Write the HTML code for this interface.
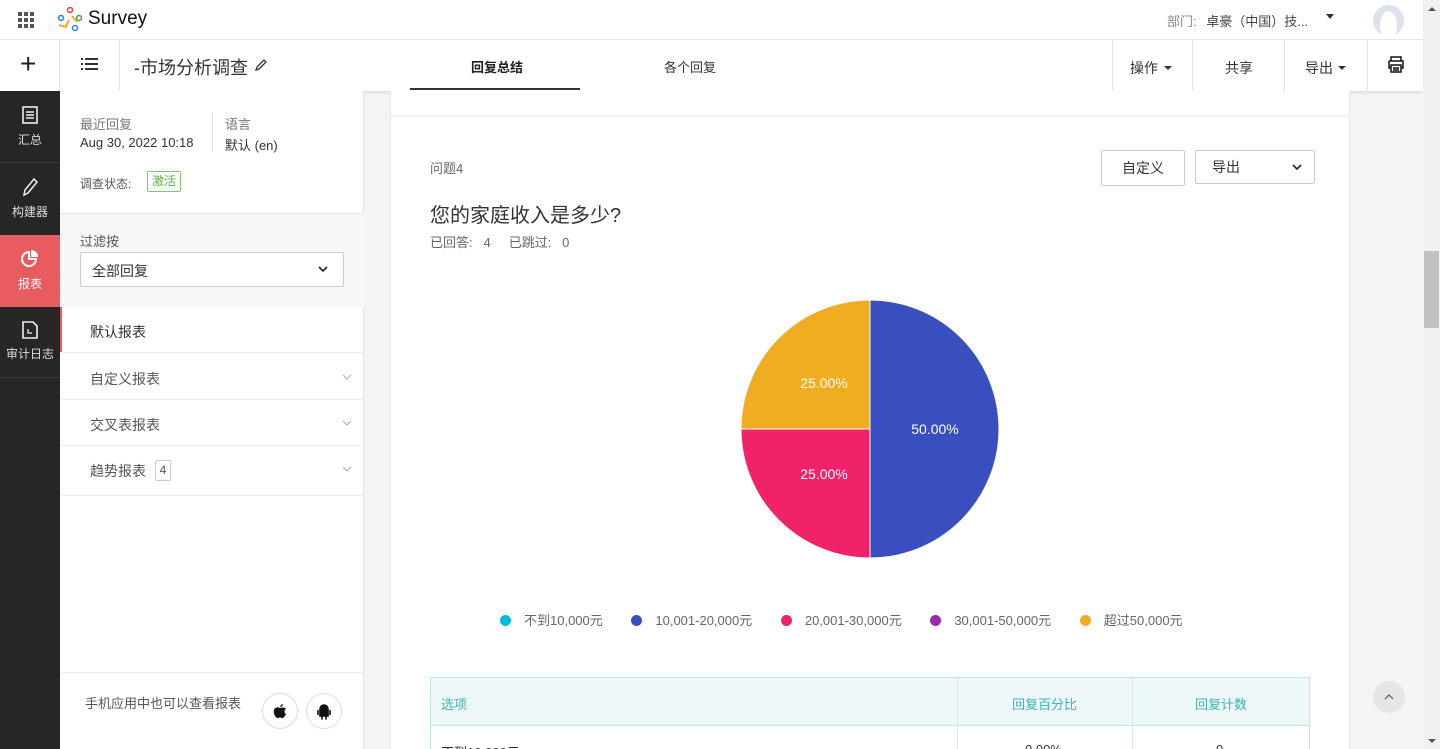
<!DOCTYPE html>
<html style="overflow:hidden;height:749px"><head><meta charset="utf-8">
<style>
*{box-sizing:border-box;margin:0;padding:0}
html,body{overflow:hidden}
body{width:1440px;height:749px;overflow:hidden;font-family:"Liberation Sans","Noto Sans CJK SC",sans-serif;background:#f4f4f4;position:relative;color:#333}
.abs{position:absolute}
#wrap{position:absolute;left:0;top:0;width:1440px;height:749px;overflow:hidden}
</style></head><body><div id="wrap">
<div class="abs" style="left:0;top:0;width:1423px;height:40px;background:#fff;border-bottom:1px solid #e6e6e6"></div>
<svg class="abs" style="left:18px;top:12px" width="16" height="16"><g fill="#555"><rect x="0" y="0" width="4" height="4"/><rect x="6" y="0" width="4" height="4"/><rect x="12" y="0" width="4" height="4"/><rect x="0" y="6" width="4" height="4"/><rect x="6" y="6" width="4" height="4"/><rect x="12" y="6" width="4" height="4"/><rect x="0" y="12" width="4" height="4"/><rect x="6" y="12" width="4" height="4"/><rect x="12" y="12" width="4" height="4"/></g></svg>
<svg class="abs" style="left:57px;top:6px" width="26" height="26"><circle cx="13" cy="4" r="2.5" fill="none" stroke="#e53935" stroke-width="1.5"/><circle cx="4" cy="12" r="2.5" fill="none" stroke="#1e88e5" stroke-width="1.5"/><circle cx="22" cy="12" r="2.5" fill="none" stroke="#43a047" stroke-width="1.5"/><circle cx="18" cy="22" r="2.5" fill="none" stroke="#1e88e5" stroke-width="1.5"/><path d="M2 19 L9 21 M12 14 L8 22 M15 10 L20 16" stroke="#f9a825" stroke-width="2"/></svg>
<div class="abs" style="left:88px;top:8px;font-size:19px;color:#111">Survey</div>
<div class="abs" style="left:1167px;top:11px;font-size:13px;color:#888">部门: <span style="color:#444;margin-left:6px">卓豪（中国）技...</span></div>
<div class="abs" style="left:1326px;top:14px;border:4px solid transparent;border-top:5px solid #333"></div>
<div class="abs" style="left:1373px;top:5px;width:31px;height:31px;border-radius:50%;background:#dde2ea;overflow:hidden"><div style="position:absolute;left:7px;top:6px;width:17px;height:30px;border-radius:50%;background:#fff"></div></div>
<div class="abs" style="left:0;top:40px;width:1423px;height:51px;background:#fff;box-shadow:0 2px 3px rgba(0,0,0,.1)"></div>
<div class="abs" style="left:59px;top:40px;width:1px;height:51px;background:#e6e6e6"></div>
<div class="abs" style="left:119px;top:40px;width:1px;height:51px;background:#e6e6e6"></div>
<div class="abs" style="left:20px;top:50px;font-size:28px;font-weight:300;color:#222;line-height:28px">+</div>
<svg class="abs" style="left:81px;top:58px" width="18" height="14"><g fill="#333"><rect x="0" y="0" width="2" height="2"/><rect x="4" y="0" width="13" height="2"/><rect x="0" y="5" width="2" height="2"/><rect x="4" y="5" width="13" height="2"/><rect x="0" y="10" width="2" height="2"/><rect x="4" y="10" width="13" height="2"/></g></svg>
<div class="abs" style="left:134px;top:54px;font-size:18px;color:#333">-市场分析调查</div>
<svg class="abs" style="left:254px;top:58px" width="14" height="14"><path d="M2 12 L3 9 L10 2 L12 4 L5 11 Z" fill="none" stroke="#333" stroke-width="1.3"/></svg>
<div class="abs" style="left:471px;top:57px;font-size:13px;font-weight:bold;color:#222">回复总结</div>
<div class="abs" style="left:410px;top:88px;width:170px;height:2px;background:#333"></div>
<div class="abs" style="left:664px;top:57px;font-size:13px;color:#333">各个回复</div>
<div class="abs" style="left:1112px;top:40px;width:1px;height:51px;background:#e6e6e6"></div>
<div class="abs" style="left:1192px;top:40px;width:1px;height:51px;background:#e6e6e6"></div>
<div class="abs" style="left:1284px;top:40px;width:1px;height:51px;background:#e6e6e6"></div>
<div class="abs" style="left:1367px;top:40px;width:1px;height:51px;background:#e6e6e6"></div>
<div class="abs" style="left:1130px;top:58px;font-size:14px;color:#333">操作</div>
<div class="abs" style="left:1164px;top:66px;border:4px solid transparent;border-top:4px solid #333"></div>
<div class="abs" style="left:1225px;top:58px;font-size:14px;color:#333">共享</div>
<div class="abs" style="left:1305px;top:58px;font-size:14px;color:#333">导出</div>
<div class="abs" style="left:1338px;top:66px;border:4px solid transparent;border-top:4px solid #333"></div>
<svg class="abs" style="left:1387px;top:56px" width="18" height="17"><path d="M4 5 V1 H14 V5 M2 5 H16 V12 H14 M4 12 H2 V5 M4 9 H14 V16 H4 Z M6 12 H12 M6 14 H12" fill="none" stroke="#111" stroke-width="1.5"/></svg>
<div class="abs" style="left:1423px;top:0;width:17px;height:749px;background:#f1f1f1"></div>
<div class="abs" style="left:1424px;top:251px;width:15px;height:77px;background:#c1c1c1"></div>
<div class="abs" style="left:1428px;top:7px;border:4px solid transparent;border-bottom:4px solid #555;border-top:0"></div>
<div class="abs" style="left:1428px;top:739px;border:4px solid transparent;border-top:4px solid #555;border-bottom:0"></div>
<div class="abs" style="left:0;top:91px;width:60px;height:658px;background:#262626"></div>
<div class="abs" style="left:0;top:91px;width:60px;height:72px;border-bottom:1px solid #3a3a3a;color:#ddd;text-align:center;font-size:12px">
<svg style="margin-top:15px" width="16" height="18"><rect x="1" y="1" width="14" height="16" fill="none" stroke="#eee" stroke-width="1.6"/><path d="M4 6H12M4 9H12M4 12H12" stroke="#eee" stroke-width="1.4"/></svg><div style="margin-top:4px">汇总</div></div>
<div class="abs" style="left:0;top:164px;width:60px;height:71px;color:#ddd;text-align:center;font-size:12px">
<svg style="margin-top:13px" width="18" height="20"><path d="M3 18 L4 13 L13 2 L16 5 L7 16 Z" fill="none" stroke="#eee" stroke-width="1.5"/></svg><div style="margin-top:3px">构建器</div></div>
<div class="abs" style="left:0;top:235px;width:60px;height:72px;background:#e85b5e;color:#fff;text-align:center;font-size:12px">
<svg style="margin-top:14px" width="18" height="18"><path d="M8 3 A7 7 0 1 0 15 10 H8 Z" fill="none" stroke="#fff" stroke-width="2"/><path d="M10 1 A7 7 0 0 1 17 8 H10 Z" fill="#fff"/></svg><div style="margin-top:5px">报表</div></div>
<div class="abs" style="left:0;top:307px;width:60px;height:71px;border-bottom:1px solid #3a3a3a;color:#ddd;text-align:center;font-size:12px">
<svg style="margin-top:14px" width="16" height="18"><path d="M1 1H11L15 5V17H1Z" fill="none" stroke="#eee" stroke-width="1.6"/><path d="M6 8V12H10" stroke="#eee" stroke-width="1.3" fill="none"/></svg><div style="margin-top:3px">审计日志</div></div>
<div class="abs" style="left:60px;top:91px;width:304px;height:658px;background:#fff;border-right:1px solid #e2e2e2"></div>
<div class="abs" style="left:80px;top:114px;font-size:13px;color:#777">最近回复</div>
<div class="abs" style="left:80px;top:135px;font-size:13px;color:#333">Aug 30, 2022 10:18</div>
<div class="abs" style="left:212px;top:112px;width:1px;height:40px;background:#e2e2e2"></div>
<div class="abs" style="left:225px;top:114px;font-size:13px;color:#777">语言</div>
<div class="abs" style="left:225px;top:135px;font-size:13px;color:#333">默认 (en)</div>
<div class="abs" style="left:80px;top:175px;font-size:12px;color:#555">调查状态:</div>
<div class="abs" style="left:147px;top:171px;width:34px;height:21px;border:1px solid #7cc96c;border-radius:2px;color:#5bb34a;font-size:12px;text-align:center;line-height:19px">激活</div>
<div class="abs" style="left:60px;top:213px;width:304px;height:94px;background:#f7f7f7;border-top:1px solid #e6e6e6"></div>
<div class="abs" style="left:80px;top:231px;font-size:13px;color:#555">过滤按</div>
<div class="abs" style="left:80px;top:252px;width:264px;height:35px;background:#fff;border:1px solid #ccc;border-radius:2px;font-size:14px;color:#333;padding:8px 11px">全部回复</div>
<svg class="abs" style="left:318px;top:266px" width="10" height="7"><path d="M1 1L5 5L9 1" fill="none" stroke="#222" stroke-width="1.6"/></svg>
<div class="abs" style="left:60px;top:307px;width:2px;height:46px;background:#e85b5e"></div>
<div class="abs" style="left:90px;top:322px;font-size:14px;color:#333">默认报表</div>
<div class="abs" style="left:60px;top:352px;width:304px;height:1px;background:#ececec"></div>
<div class="abs" style="left:90px;top:369px;font-size:14px;color:#555">自定义报表</div>
<div class="abs" style="left:60px;top:399px;width:304px;height:1px;background:#ececec"></div>
<div class="abs" style="left:90px;top:415px;font-size:14px;color:#555">交叉表报表</div>
<div class="abs" style="left:60px;top:445px;width:304px;height:1px;background:#ececec"></div>
<div class="abs" style="left:90px;top:461px;font-size:14px;color:#555">趋势报表</div>
<div class="abs" style="left:155px;top:460px;width:16px;height:21px;border:1px solid #ccc;border-radius:2px;font-size:12px;text-align:center;line-height:19px;color:#555">4</div>
<div class="abs" style="left:60px;top:495px;width:304px;height:1px;background:#ececec"></div>
<svg class="abs" style="left:342px;top:374px" width="10" height="6"><path d="M1 1L5 5L9 1" fill="none" stroke="#aaa"/></svg>
<svg class="abs" style="left:342px;top:420px" width="10" height="6"><path d="M1 1L5 5L9 1" fill="none" stroke="#aaa"/></svg>
<svg class="abs" style="left:342px;top:466px" width="10" height="6"><path d="M1 1L5 5L9 1" fill="none" stroke="#aaa"/></svg>
<div class="abs" style="left:60px;top:672px;width:304px;height:1px;background:#ececec"></div>
<div class="abs" style="left:85px;top:693px;font-size:13px;color:#555">手机应用中也可以查看报表</div>
<div class="abs" style="left:262px;top:693px;width:36px;height:36px;border:1px solid #ddd;border-radius:50%;text-align:center">
<svg style="margin-top:9px" width="14" height="16"><path d="M7 4C8 1 10 1 10 1C10 3 8 4 7 4ZM7 5C5 4 2 4 1 7C0 11 3 15 4.5 15C6 15 6 14.5 7 14.5C8 14.5 8 15 9.5 15C11 15 12.5 12 13 11C11 10 11 7 13 6C12 4.5 10 4 7 5Z" fill="#111"/></svg></div>
<div class="abs" style="left:306px;top:693px;width:36px;height:36px;border:1px solid #ddd;border-radius:50%;text-align:center">
<svg style="margin-top:10px" width="14" height="16"><path d="M3 5A4 4 0 0 1 11 5Z M3 6H11V12H3Z M1 6.5V10.5 M13 6.5V10.5 M5 12V15 M9 12V15" fill="#111" stroke="#111" stroke-width="1.6" stroke-linecap="round"/></svg></div>
<div class="abs" style="left:390px;top:91px;width:960px;height:658px;background:#fff;border-left:1px solid #e8e8e8;border-right:1px solid #e8e8e8"></div>
<div class="abs" style="left:390px;top:115px;width:960px;height:2px;background:#f0f0f0"></div>
<div class="abs" style="left:430px;top:158px;font-size:13px;color:#666">问题4</div>
<div class="abs" style="left:1101px;top:150px;width:84px;height:36px;border:1px solid #ccc;border-radius:2px;font-size:14px;text-align:center;line-height:34px;color:#333">自定义</div>
<div class="abs" style="left:1195px;top:150px;width:120px;height:34px;border:1px solid #ccc;border-radius:2px;font-size:14px;line-height:32px;color:#333;padding-left:16px">导出</div>
<svg class="abs" style="left:1292px;top:164px" width="10" height="7"><path d="M1 1L5 5L9 1" fill="none" stroke="#222" stroke-width="1.6"/></svg>
<div class="abs" style="left:430px;top:199px;font-size:20px;color:#333">您的家庭收入是多少?</div>
<div class="abs" style="left:430px;top:232px;font-size:13px;color:#666">已回答:&nbsp;&nbsp; 4 &nbsp;&nbsp;&nbsp;&nbsp;已跳过:&nbsp;&nbsp; 0</div>
<svg class="abs" style="left:740px;top:299px" width="260" height="260">
<path d="M130 130 L130 1 A129 129 0 0 1 130 259 Z" fill="#3a4fbf" stroke="#fff"/>
<path d="M130 130 L130 259 A129 129 0 0 1 1 130 Z" fill="#f0226a" stroke="#fff"/>
<path d="M130 130 L1 130 A129 129 0 0 1 130 1 Z" fill="#f0ad22" stroke="#fff"/>
<g fill="#fff" font-family="Liberation Sans" font-size="14" text-anchor="middle"><text x="195" y="135">50.00%</text><text x="84" y="180">25.00%</text><text x="84" y="89">25.00%</text></g>
</svg>
<div class="abs" style="left:500px;top:610px;font-size:13px;color:#666;white-space:nowrap">
<span style="display:inline-block;width:11px;height:11px;border-radius:50%;background:#00bcd4;vertical-align:-1px;margin-right:13px"></span>不到10,000元
<span style="display:inline-block;width:11px;height:11px;border-radius:50%;background:#3a4fbf;vertical-align:-1px;margin:0 13px 0 25px"></span>10,001-20,000元
<span style="display:inline-block;width:11px;height:11px;border-radius:50%;background:#f0226a;vertical-align:-1px;margin:0 13px 0 25px"></span>20,001-30,000元
<span style="display:inline-block;width:11px;height:11px;border-radius:50%;background:#9c27b0;vertical-align:-1px;margin:0 13px 0 25px"></span>30,001-50,000元
<span style="display:inline-block;width:11px;height:11px;border-radius:50%;background:#f0ad22;vertical-align:-1px;margin:0 13px 0 25px"></span>超过50,000元</div>
<div class="abs" style="left:430px;top:677px;width:880px;height:80px;border:1px solid #bfe6e6"></div>
<div class="abs" style="left:431px;top:678px;width:878px;height:48px;background:#eff8f8;border-bottom:1px solid #bfe6e6"></div>
<div class="abs" style="left:957px;top:678px;width:1px;height:80px;background:#cfeaea"></div>
<div class="abs" style="left:1132px;top:678px;width:1px;height:80px;background:#cfeaea"></div>
<div class="abs" style="left:441px;top:694px;font-size:13px;color:#3bb3b3">选项</div>
<div class="abs" style="left:1012px;top:694px;font-size:13px;color:#3bb3b3">回复百分比</div>
<div class="abs" style="left:1195px;top:694px;font-size:13px;color:#3bb3b3">回复计数</div>
<div class="abs" style="left:441px;top:742px;font-size:13px;color:#333">不到10,000元</div>
<div class="abs" style="left:1025px;top:742px;font-size:13px;color:#333">0.00%</div>
<div class="abs" style="left:1216px;top:742px;font-size:13px;color:#333">0</div>
<div class="abs" style="left:1373px;top:681px;width:32px;height:32px;border-radius:50%;background:#e6e6e6;text-align:center">
<svg style="margin-top:12px" width="10" height="7"><path d="M1 6L5 2L9 6" fill="none" stroke="#555" stroke-width="1.2"/></svg></div>
</div></body></html>
